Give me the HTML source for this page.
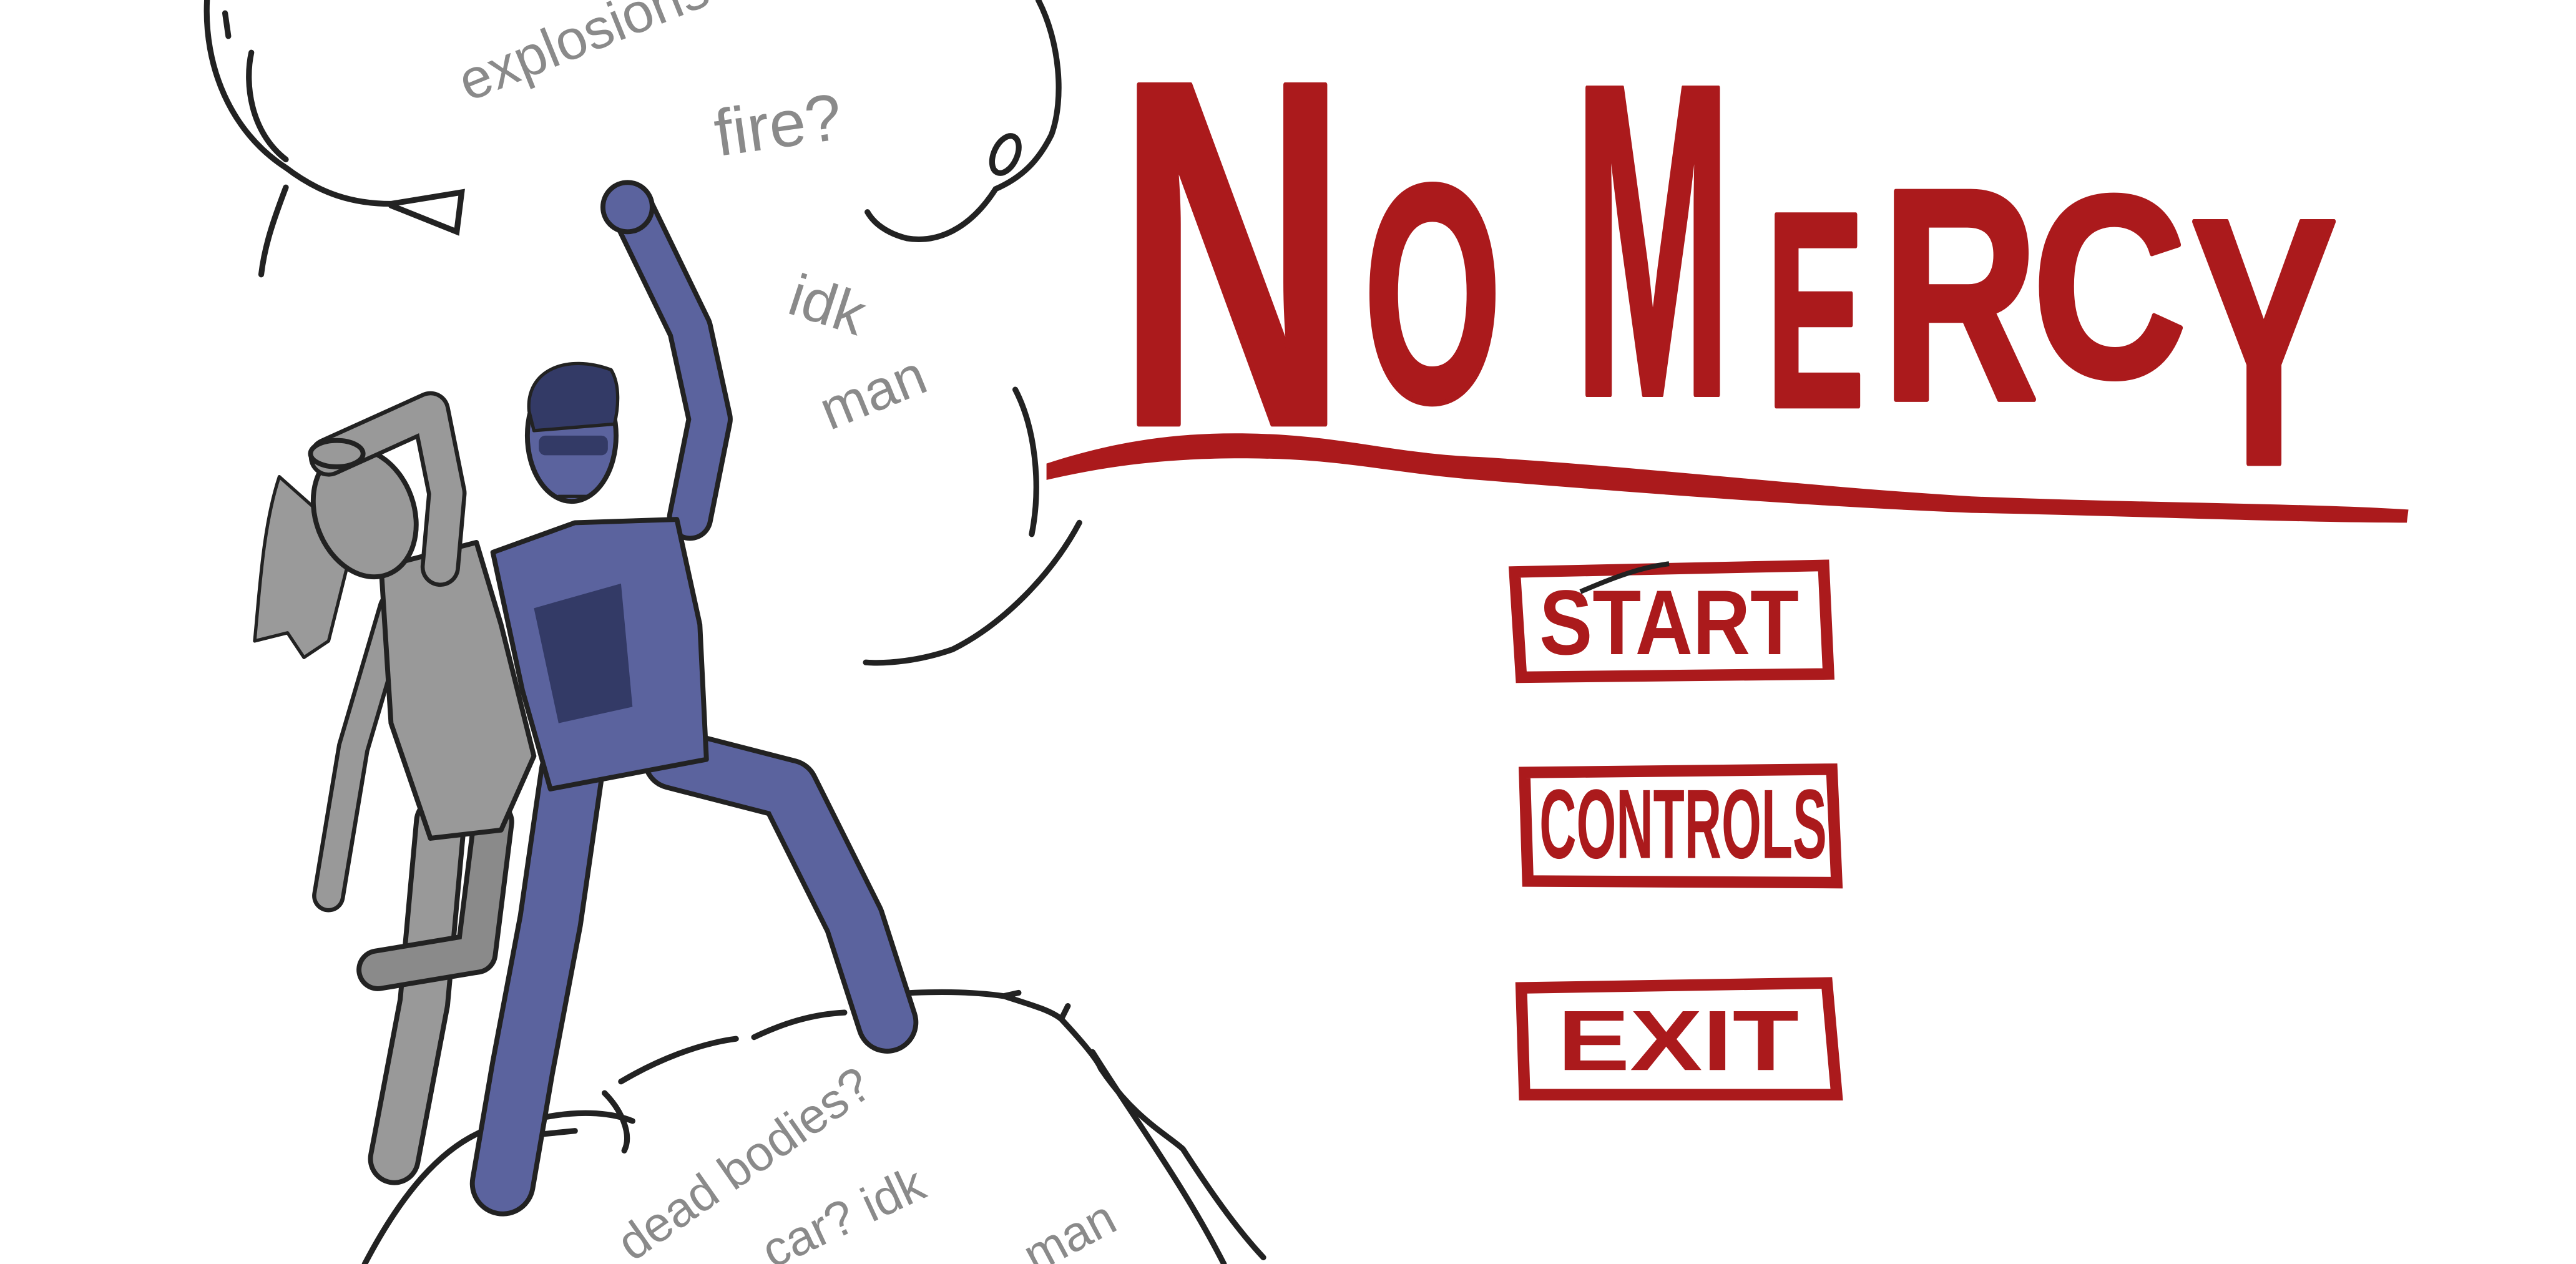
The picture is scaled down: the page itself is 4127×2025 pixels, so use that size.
<!DOCTYPE html>
<html><head><meta charset="utf-8"><style>
html,body{margin:0;padding:0;background:#fff;width:4127px;height:2025px;overflow:hidden}
svg{display:block}
.t{font-family:"Liberation Sans Narrow","Liberation Sans",sans-serif;font-weight:bold;fill:#ab1a1c}
.g{font-family:"Liberation Sans",sans-serif;fill:#8a8a8a}
</style></head><body>
<svg width="4127" height="2025" viewBox="0 0 1568 769" preserveAspectRatio="none" xmlns="http://www.w3.org/2000/svg">
<rect width="1568" height="769" fill="#fff"/>
<!-- speech bubble -->
<g fill="none" stroke="#222" stroke-width="3.5" stroke-linecap="round">
<path d="M126,0 C124,40 140,80 174,102 C195,118 215,124 238,124 L281,117 L278,141 L238,125"/>
<path d="M153,32 C149,50 152,80 174,97"/>
<path d="M174,114 C166,135 161,150 159,167"/>
<path d="M137,8 L139,22"/>
<path d="M632,0 C645,25 648,60 640,82 C632,98 622,108 606,115 C590,140 570,148 552,145 C540,142 532,136 528,129"/>
<ellipse cx="612" cy="94" rx="7" ry="12" transform="rotate(25 612 94)"/>
<path d="M618,237 C630,260 634,295 628,325"/>
<path d="M657,318 C640,350 610,380 580,395 C560,402 540,404 527,403"/>
<path d="M222,769 C245,725 268,700 292,689"/>
<path d="M378,658 C400,645 425,635 448,632"/>
<path d="M459,631 C478,622 495,617 514,616"/>
<path d="M539,605 C565,603 590,603 611,606 L620,604 M611,606 C630,612 640,615 646,620 L650,612 M646,620 C660,635 668,645 670,650 C690,680 710,690 720,699 C740,730 755,750 769,765"/>
<path d="M665,640 C690,680 720,720 745,769"/>
<path d="M330,680 C350,676 370,676 385,682 M368,665 C378,675 385,690 380,700 M350,688 L330,690"/>
</g>
<!-- woman -->
<g stroke="#222" stroke-linejoin="round" stroke-linecap="round">
<path d="M240,370 L215,455 L200,545" stroke="#222" stroke-width="20" fill="none"/>
<path d="M240,370 L215,455 L200,545" stroke="#999" stroke-width="15" fill="none"/>
<path d="M268,500 L258,610 L240,705" stroke-width="32" fill="none"/>
<path d="M268,500 L258,610 L240,705" stroke="#999" stroke-width="26" fill="none"/>
<path d="M300,500 L290,580 L230,590" stroke-width="26" fill="none"/>
<path d="M300,500 L290,580 L230,590" stroke="#8a8a8a" stroke-width="20" fill="none"/>
<path d="M170,290 C160,320 158,360 155,390 L175,385 L185,400 L200,390 L215,330 Z" fill="#9a9a9a" stroke-width="2"/>
<path d="M232,345 L290,330 L305,380 L325,460 L305,505 L262,510 L238,440 Z" fill="#999" stroke-width="3"/>
<ellipse cx="222" cy="312" rx="30" ry="40" transform="rotate(-20 222 312)" fill="#999" stroke-width="3"/>
<path d="M200,278 L262,250 L272,300 L268,345" stroke-width="24" fill="none"/>
<path d="M200,278 L262,250 L272,300 L268,345" stroke="#999" stroke-width="19" fill="none"/>
<ellipse cx="205" cy="276" rx="16" ry="8" fill="#999" stroke-width="3"/>
</g>
<!-- man -->
<g stroke="#222" stroke-linejoin="round" stroke-linecap="round">
<path d="M410,462 L480,480 L520,560 L540,622" stroke-width="38" fill="none"/>
<path d="M410,462 L480,480 L520,560 L540,622" stroke="#5b639e" stroke-width="32" fill="none"/>
<path d="M348,470 L335,560 L318,650 L306,720" stroke-width="40" fill="none"/>
<path d="M348,470 L335,560 L318,650 L306,720" stroke="#5b639e" stroke-width="34" fill="none"/>
<path d="M386,130 L420,200 L432,255 L420,315" stroke-width="28" fill="none"/>
<path d="M386,130 L420,200 L432,255 L420,315" stroke="#5b639e" stroke-width="22" fill="none"/>
<path d="M300,336 L350,318 L412,316 L426,380 L430,462 L335,480 L318,420 Z" fill="#5b639e" stroke-width="3"/>
<path d="M325,370 L378,355 L385,430 L340,440 Z" fill="#333a66" stroke="none"/>
<circle cx="382" cy="126" r="15" fill="#5b639e" stroke-width="3"/>
<ellipse cx="348" cy="265" rx="27" ry="40" fill="#5b639e" stroke-width="3"/>
<path d="M322,250 C320,225 345,215 372,225 C378,235 376,250 374,258 L325,262 Z" fill="#333a66" stroke-width="2"/>
<rect x="328" y="265" width="42" height="12" rx="4" fill="#333a66" stroke="none"/>
<path d="M340,302 L358,302" stroke-width="2"/>
</g>
<!-- grey scribble text -->
<text class="g" font-size="34" transform="translate(285,62) rotate(-22)">explosions?</text>
<text class="g" font-size="40" transform="translate(437,95) rotate(-8)">fire?</text>
<text class="g" font-size="36" transform="translate(478,190) rotate(18)">idk</text>
<text class="g" font-size="34" transform="translate(505,262) rotate(-22)">man</text>
<text class="g" font-size="30" transform="translate(385,768) rotate(-35)">dead bodies?</text>
<text class="g" font-size="30" transform="translate(470,772) rotate(-25)">car?  idk</text>
<text class="g" font-size="30" transform="translate(630,775) rotate(-28)">man</text>
<!-- title -->
<g stroke="#ab1a1c" stroke-width="3" stroke-linejoin="round">
<text class="t" x="680" y="258" font-size="300" textLength="140" lengthAdjust="spacingAndGlyphs">N</text>
<text class="t" x="830" y="244" font-size="189" textLength="84" lengthAdjust="spacingAndGlyphs">O</text>
<text class="t" x="958" y="240" font-size="271" textLength="96" lengthAdjust="spacingAndGlyphs">M</text>
<text class="t" x="1075" y="247" font-size="169" textLength="60" lengthAdjust="spacingAndGlyphs">E</text>
<text class="t" x="1145" y="243" font-size="184" textLength="96" lengthAdjust="spacingAndGlyphs">R</text>
<text class="t" x="1237" y="229" font-size="158" textLength="94" lengthAdjust="spacingAndGlyphs">C</text>
<text class="t" x="1333" y="282" font-size="214" textLength="90" lengthAdjust="spacingAndGlyphs">Y</text>
</g>
<path d="M637,282 C680,268 720,262 770,264 C820,266 850,276 900,278 C1000,284 1100,296 1200,302 C1300,306 1400,306 1466,310 L1465,318 C1400,318 1300,314 1200,312 C1100,308 1000,300 900,292 C850,288 820,280 770,279 C720,278 680,282 637,292 Z" fill="#ab1a1c"/>
<!-- buttons -->
<g fill="none" stroke="#ab1a1c" stroke-width="7">
<path d="M922,348 L1110,344 L1113,410 L926,412 Z"/>
<path d="M928,470 L1115,468 L1118,537 L930,536 Z"/>
<path d="M926,601 L1112,598 L1118,666 L928,666 Z"/>
</g>
<text class="t" x="937" y="398" font-size="56" textLength="158" lengthAdjust="spacingAndGlyphs">START</text>
<path d="M962,360 C985,350 1000,345 1016,343" stroke="#222" stroke-width="3" fill="none"/>
<text class="t" x="937" y="522" font-size="60" textLength="175" lengthAdjust="spacingAndGlyphs">CONTROLS</text>
<text class="t" x="948" y="651" font-size="52" textLength="147" lengthAdjust="spacingAndGlyphs">EXIT</text>
</svg>
</body></html>
